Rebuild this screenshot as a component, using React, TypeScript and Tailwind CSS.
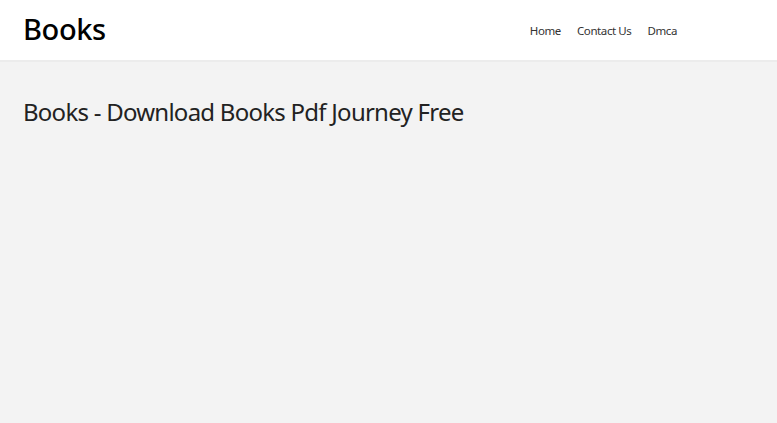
const navItems = ["Home", "Contact Us", "Dmca"];

export default function App() {
    return (
        <div className="min-h-[423px] bg-[#f3f3f3] font-['Noto_Sans',sans-serif] text-[#222]">
            <header className="h-[62px] bg-white border-b-2 border-[#ececec] flex items-center justify-between pl-[23px] pr-[100px]">
                <a className="text-[29px] font-medium leading-none text-black tracking-[-0.4px] -mt-[3px]">Books</a>
                <nav className="flex items-center gap-[16px] text-[11.5px] tracking-[-0.4px] text-[#333] mt-[1px]">
                    {navItems.map((item) => (
                        <a key={item}>{item}</a>
                    ))}
                </nav>
            </header>
            <main className="px-[23px] pt-[35px]">
                <h1 className="text-[24px] leading-tight tracking-[-0.75px] text-[#222]">
                    Books - Download Books Pdf Journey Free
                </h1>
            </main>
        </div>
    );
}
